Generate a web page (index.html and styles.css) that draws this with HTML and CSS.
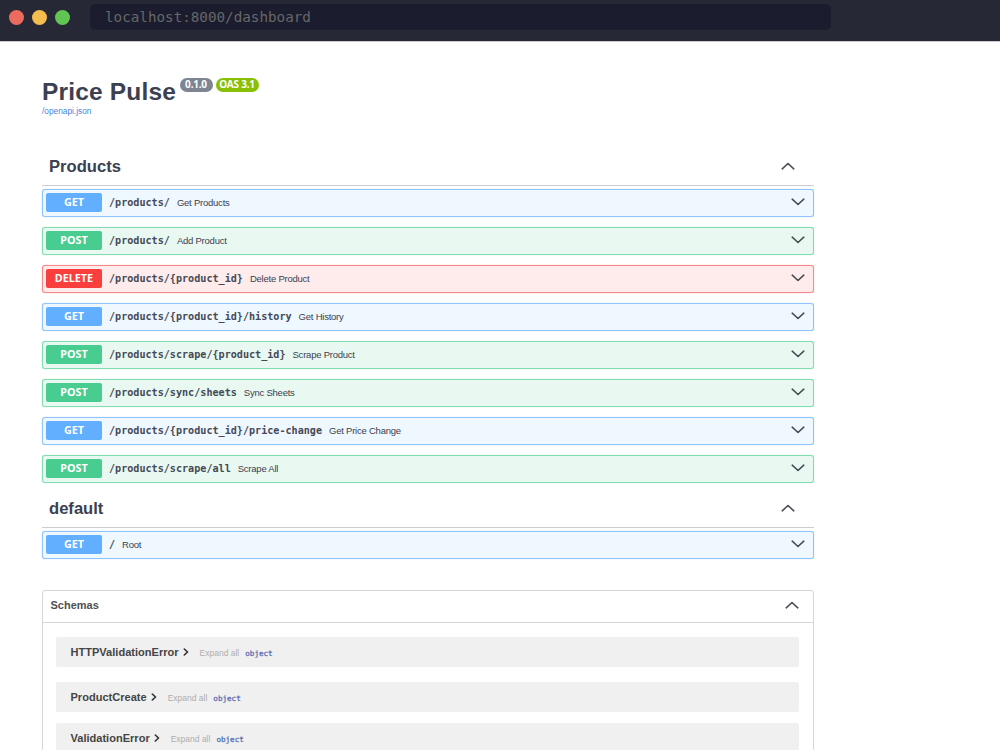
FILE: index.html
```html
<!DOCTYPE html>
<html lang="en">
<head>
<meta charset="utf-8">
<title>Price Pulse</title>
<link rel="stylesheet" href="styles.css">
</head>
<body>
<svg class="defs" width="0" height="0"><defs>
<symbol id="down" viewBox="0 0 14 8"><path d="M1.2 1.2 L7 6.5 L12.8 1.2"/></symbol>
<symbol id="up" viewBox="0 0 14 8"><path d="M1.2 6.8 L7 1.5 L12.8 6.8"/></symbol>
<symbol id="right" viewBox="0 0 6 8"><path d="M1.3 1 L4.5 4 L1.3 7"/></symbol>
</defs></svg>
<header class="browser">
<div class="lights"><i class="red"></i><i class="yellow"></i><i class="green"></i></div>
<div class="address">localhost:8000/dashboard</div>
</header>
<main class="page">
<div class="info">
<div class="heading"><h1>Price Pulse</h1><span class="badge version">0.1.0</span><span class="badge oas">OAS 3.1</span></div>
<a class="spec">/openapi.json</a>
</div>
<section class="tag">
<h2>Products<svg class="chev"><use href="#up"/></svg></h2>
<div class="ops">
<div class="op get"><b class="method">GET</b><code>/products/</code><span>Get Products</span><svg class="chev"><use href="#down"/></svg></div>
<div class="op post"><b class="method">POST</b><code>/products/</code><span>Add Product</span><svg class="chev"><use href="#down"/></svg></div>
<div class="op delete"><b class="method">DELETE</b><code>/products/{product_id}</code><span>Delete Product</span><svg class="chev"><use href="#down"/></svg></div>
<div class="op get"><b class="method">GET</b><code>/products/{product_id}/history</code><span>Get History</span><svg class="chev"><use href="#down"/></svg></div>
<div class="op post"><b class="method">POST</b><code>/products/scrape/{product_id}</code><span>Scrape Product</span><svg class="chev"><use href="#down"/></svg></div>
<div class="op post"><b class="method">POST</b><code>/products/sync/sheets</code><span>Sync Sheets</span><svg class="chev"><use href="#down"/></svg></div>
<div class="op get"><b class="method">GET</b><code>/products/{product_id}/price-change</code><span>Get Price Change</span><svg class="chev"><use href="#down"/></svg></div>
<div class="op post"><b class="method">POST</b><code>/products/scrape/all</code><span>Scrape All</span><svg class="chev"><use href="#down"/></svg></div>
</div>
</section>
<section class="tag second">
<h2>default<svg class="chev"><use href="#up"/></svg></h2>
<div class="ops">
<div class="op get"><b class="method">GET</b><code>/</code><span>Root</span><svg class="chev"><use href="#down"/></svg></div>
</div>
</section>
<section class="schemas">
<h3>Schemas<svg class="chev"><use href="#up"/></svg></h3>
<div class="models">
<div class="model"><b>HTTPValidationError</b><svg class="arrow"><use href="#right"/></svg><span>Expand all</span><em>object</em></div>
<div class="model"><b>ProductCreate</b><svg class="arrow"><use href="#right"/></svg><span>Expand all</span><em>object</em></div>
<div class="model"><b>ValidationError</b><svg class="arrow"><use href="#right"/></svg><span>Expand all</span><em>object</em></div>
</div>
</section>
</main>
</body>
</html>
```
FILE: styles.css
```css
* { box-sizing: border-box; }
html, body { height: 750px; overflow: hidden; }
body { margin: 0; background: #fff; color: #3b4151; font-family: "Liberation Sans", sans-serif; }
.defs { display: block; height: 0; }
svg { fill: none; stroke: #4a4d55; stroke-width: 1.6; stroke-linecap: round; stroke-linejoin: round; }
.chev { width: 14px; height: 8px; margin-left: auto; flex: none; }

.browser { display: flex; height: 41px; padding: 4px 0 0 9px; background: #272836; box-shadow: 0 1px 0 #c9c9ce; }
.lights { display: flex; gap: 8px; width: 81px; padding-top: 5.5px; }
.lights i { width: 15px; height: 15px; border-radius: 50%; }
.red { background: #ed6a5f; }
.yellow { background: #f5bd4f; }
.green { background: #61c554; }
.address { width: 741px; height: 26px; padding-left: 15px; border-radius: 5px; background: #1b1d2e; color: #666768; font: 14.25px/26px "DejaVu Sans Mono", monospace; }

.page { width: 772px; margin-left: 41.5px; }
.info { height: 109px; padding-top: 35px; }
.heading { display: flex; align-items: flex-start; }
h1 { margin: 0; width: 138px; padding-left: 0.5px; font-size: 24.5px; line-height: 32px; height: 31px; letter-spacing: 0.18px; white-space: nowrap; }
.badge { height: 14px; margin-top: 2px; border-radius: 7px; color: #fff; font: bold 10px/13px "Noto Sans", sans-serif; letter-spacing: -0.2px; text-align: center; }
.version { width: 33px; margin-right: 3px; background: #7d8492; }
.oas { width: 43px; background: #89bf04; }
.spec { display: block; padding-left: 0.5px; font-size: 8.3px; line-height: 9px; color: #3f87dc; }

h2 { display: flex; align-items: center; height: 36px; margin: 0; padding: 0 19px 1px 7.5px; border-bottom: 1px solid #cccdd2; font-size: 16.6px; }
h2 .chev { margin-bottom: 3px; }
.ops { display: flex; flex-direction: column; gap: 10px; padding-top: 3px; }
.op { display: flex; align-items: center; height: 28px; padding: 0 8px 0 3.5px; border: 1px solid; border-radius: 3px; box-shadow: 0 0 1px currentColor; }
.get { color: #8fc3fc; background: #eff7ff; }
.post { color: #83dcb1; background: #e9f9f1; }
.delete { color: #f7898b; background: #feebeb; }
.method { width: 56px; height: 19px; margin: 0 7px 1px 0; border-radius: 2px; color: #fff; font: bold 10.8px/17px "Noto Sans", sans-serif; text-align: center; }
.get .method { background: #61affe; }
.post .method { background: #49cc90; }
.delete .method { background: #f93e3e; }
.op code { margin-right: 7px; color: #454a57; font: bold 10.12px/16px "DejaVu Sans Mono", monospace; }
.op span { color: #3b4151; font-size: 9.5px; line-height: 16px; letter-spacing: -0.23px; }
.op .chev { margin-bottom: 2px; }
.second h2 { height: 37px; margin-top: 8px; padding-bottom: 0; }

.schemas { height: 190px; margin-top: 31px; border: 1px solid #d5d6d8; border-radius: 3px; }
h3 { display: flex; align-items: center; height: 32px; margin: 0; padding: 0 14px 3px 8px; border-bottom: 1px solid #d5d6d8; font-size: 11px; color: #505050; }
.models { padding: 14px 14px 0 13.5px; }
.model { display: flex; align-items: center; height: 30px; margin-bottom: 15px; padding-left: 14.5px; border-radius: 2px; background: #f0f0f0; }
.model + .model { margin-bottom: 11px; }
.model b { color: #454545; font-size: 11.05px; }
.arrow { width: 6px; height: 8px; margin: 0 11px 0 4px; stroke: #333; }
.model span { margin-right: 6px; padding-top: 1px; color: #afaeae; font-size: 8.5px; }
.model em { padding-top: 2px; color: #4a62ae; font: normal 7.6px "DejaVu Sans Mono", monospace; -webkit-text-stroke: 0.2px; }
```
